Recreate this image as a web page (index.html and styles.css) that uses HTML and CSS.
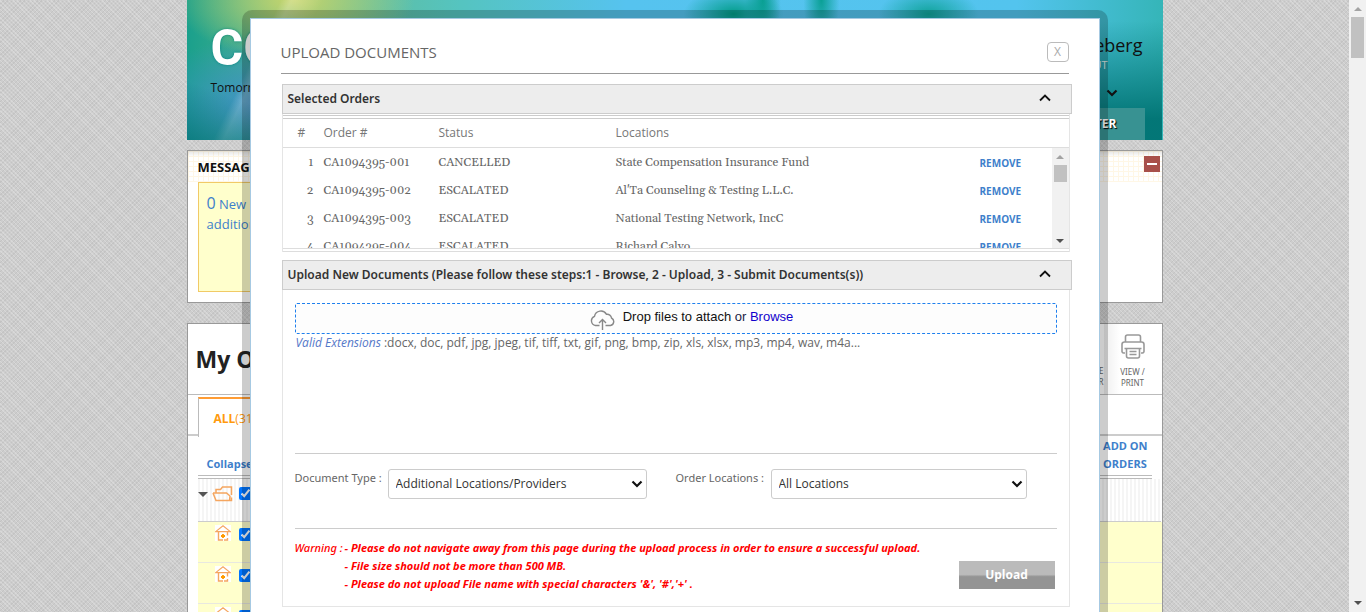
FILE: index.html
```html
<!DOCTYPE html>
<html lang="en">
<head>
<meta charset="utf-8">
<title>Upload Documents</title>
<link rel="stylesheet" href="styles.css">
</head>
<body>
<svg class="sprite" aria-hidden="true">
  <symbol id="house" viewBox="0 0 16 16">
    <rect width="16" height="16" fill="#fff"/>
    <path d="M.7 6.600 8 .8l7.300 5.800H.7Z" fill="none" stroke="#f5a660" stroke-width="1.200"/>
    <path d="M3.500 7v8H8M12.500 7v3.500M12.500 13v2H9" fill="none" stroke="#f5a660" stroke-width="1.400"/>
    <path d="M8 9v4M6 11h4" stroke="#f90" stroke-width="1.800"/>
  </symbol>
  <symbol id="chevron-up" viewBox="0 0 12 8"><path d="M1 6.500 6 1.500l5 5" fill="none" stroke="#111" stroke-width="1.800"/></symbol>
  <symbol id="chevron-down" viewBox="0 0 12 8"><path d="M1.500 1.500 6 6l4.500-4.500" fill="none" stroke="#111" stroke-width="2.200"/></symbol>
</svg>
<div class="window">
  <main class="page">
    <header class="banner">
      <div class="brand">
        <div class="logo">CO</div>
        <div class="tagline">Tomorrow</div>
      </div>
      <div class="account">
        <div class="user">eberg</div>
        <a class="logout" href="#">LOGOUT</a>
        <svg class="account-arrow" width="12" height="8"><use href="#chevron-down"/></svg>
        <a class="center-link" href="#">CENTER</a>
      </div>
    </header>

    <section class="card messages">
      <div class="messages-head">
        <h2>MESSAGES</h2>
        <button class="minimize" aria-label="Minimize"></button>
      </div>
      <div class="note"><a href="#"><span class="count">0</span> New C<br>addition</a></div>
    </section>

    <section class="card orders">
      <div class="orders-head">
        <h1>My Orders</h1>
        <div class="tools">
          <a class="tool" href="#">CE<br>R</a>
          <a class="tool print" href="#">
            <svg width="24" height="25" viewBox="0 0 24 25" fill="none" stroke="#999" stroke-width="1.600">
              <path d="M4.500 8V3a2 2 0 0 1 2-2h11a2 2 0 0 1 2 2v5"/>
              <path d="M4 19H2.500A1.700 1.700 0 0 1 1 17v-6.500A2.500 2.500 0 0 1 3.500 8h17a2.500 2.500 0 0 1 2.500 2.500V17a1.700 1.700 0 0 1-1.500 2H20"/>
              <path d="M3.500 14.500h17M5.500 14.500V22a2 2 0 0 0 2 2h9a2 2 0 0 0 2-2v-7.500M8.500 17.500h7M8.500 20.500h7"/>
            </svg>
            <span>VIEW /<br>PRINT</span>
          </a>
        </div>
      </div>
      <div class="tabs"><a class="tab" href="#"><b>ALL</b>(31)</a></div>
      <div class="list-head"><a href="#">Collapse</a><a class="addon" href="#">ADD ON<br>ORDERS</a></div>
      <div class="list">
        <div class="row group">
          <svg width="10" height="6" viewBox="0 0 10 6"><path d="M0 0h10L5 5Z" fill="#555"/></svg>
          <svg class="folder" width="21" height="16" viewBox="0 0 21 16" fill="none" stroke="#f5a660" stroke-width="1.500">
            <path d="M4 7V3.500H8.500L10.500 1H19.500V9"/>
            <path d="M1 7H14.500L18 10M1 7l3 7.500h13.500L18 10M19.500 11.500v3H16"/>
          </svg>
          <input type="checkbox" checked aria-label="Select group">
        </div>
        <div class="row"><svg width="16" height="16"><use href="#house"/></svg><input type="checkbox" checked aria-label="Select order 1"></div>
        <div class="row"><svg width="16" height="16"><use href="#house"/></svg><input type="checkbox" checked aria-label="Select order 2"></div>
        <div class="row"><svg width="16" height="16"><use href="#house"/></svg><input type="checkbox" checked aria-label="Select order 3"></div>
      </div>
    </section>
  </main>
  <div class="scrollbar"><i class="arrow up"></i><i class="thumb"></i><i class="arrow down"></i></div>
</div>

<div class="overlay">
  <div class="dialog" role="dialog" aria-labelledby="title">
    <div class="dialog-head">
      <h2 id="title">UPLOAD DOCUMENTS</h2>
      <button class="close" aria-label="Close">X</button>
    </div>

    <section class="panel">
      <button class="panel-title">Selected Orders<svg width="12" height="8"><use href="#chevron-up"/></svg></button>
      <div class="selected">
        <table>
          <thead><tr><th>#</th><th>Order #</th><th>Status</th><th>Locations</th><th></th></tr></thead>
          <tbody>
            <tr><td>1</td><td>CA1094395-001</td><td>CANCELLED</td><td>State Compensation Insurance Fund</td><td><a href="#">REMOVE</a></td></tr>
            <tr><td>2</td><td>CA1094395-002</td><td>ESCALATED</td><td>Al'Ta Counseling &amp; Testing L.L.C.</td><td><a href="#">REMOVE</a></td></tr>
            <tr><td>3</td><td>CA1094395-003</td><td>ESCALATED</td><td>National Testing Network, IncC</td><td><a href="#">REMOVE</a></td></tr>
            <tr><td>4</td><td>CA1094395-004</td><td>ESCALATED</td><td>Richard Calvo</td><td><a href="#">REMOVE</a></td></tr>
          </tbody>
        </table>
        <div class="scrollbar inner"><i class="arrow up"></i><i class="thumb"></i><i class="arrow down"></i></div>
      </div>
    </section>

    <section class="panel">
      <button class="panel-title">Upload New Documents (Please follow these steps:1 - Browse, 2 - Upload, 3 - Submit Documents(s))<svg width="12" height="8"><use href="#chevron-up"/></svg></button>
      <div class="upload">
        <div class="drop">
          <svg width="25" height="20" viewBox="0 0 25 20" fill="none" stroke="#888" stroke-width="1.400">
            <path d="M9.500 15.500H5.500A4.800 4.800 0 0 1 4.500 6.300 6.500 6.500 0 0 1 16.500 4.300 4.300 4.300 0 0 1 21.500 8 4 4 0 0 1 20.500 15.500H15.500"/>
            <path d="M12.500 20V9.500M9 13l3.500-3.500L16 13"/>
          </svg>
          <span>Drop files to attach <span class="or">or</span> <a href="#">Browse</a></span>
        </div>
        <p class="extensions"><em>Valid Extensions</em> :docx, doc, pdf, jpg, jpeg, tif, tiff, txt, gif, png, bmp, zip, xls, xlsx, mp3, mp4, wav, m4a...</p>
        <div class="fields">
          <label for="type">Document Type :</label>
          <span class="select"><select id="type"><option>Additional Locations/Providers</option></select><svg width="12" height="8"><use href="#chevron-down"/></svg></span>
          <label class="second" for="loc">Order Locations :</label>
          <span class="select all"><select id="loc"><option>All Locations</option></select><svg width="12" height="8"><use href="#chevron-down"/></svg></span>
        </div>
        <div class="foot">
          <div class="warning">
            <span>Warning :</span>
            <p>- Please do not navigate away from this page during the upload process in order to ensure a successful upload.<br>- File size should not be more than 500 MB.<br>- Please do not upload File name with special characters '&amp;', '#','+' .</p>
          </div>
          <button class="submit">Upload</button>
        </div>
      </div>
    </section>
  </div>
</div>
</body>
</html>
```
FILE: styles.css
```css
* { box-sizing: border-box; }
html, body { height: 100%; }
body {
  margin: 0;
  overflow: hidden;
  font: 12px/18px "Open Sans", "Noto Sans", sans-serif;
  color: #666;
}
h1, h2, p { margin: 0; }
a { color: #3e7fcb; text-decoration: none; }
button, select { font: inherit; }
input { margin: 0; }
.sprite { display: none; }

.window {
  display: flex;
  height: 100vh;
  overflow: hidden;
  background-color: #cdcdcd;
  background-image:
    repeating-linear-gradient(45deg, rgba(255,255,255,.22) 0 1px, transparent 1px 3px),
    repeating-linear-gradient(-45deg, rgba(140,140,140,.15) 0 1px, transparent 1px 3px);
}
.page { width: 976px; margin: 0 auto; }
.scrollbar {
  display: flex;
  flex-direction: column;
  align-items: center;
  width: 17px;
  padding: 7px 0;
  background: #f1f1f1;
}
.arrow { border: 4px solid transparent; }
.arrow.up { border-top: 0; border-bottom-color: #a3a3a3; }
.arrow.down { margin-top: auto; border-bottom: 0; border-top-color: #505050; }
.thumb { width: 13px; height: 41px; margin-top: 6px; background: #c1c1c1; }

.banner {
  display: flex;
  justify-content: space-between;
  height: 140px;
  background:
    linear-gradient(20deg, rgba(0,105,115,.6), transparent 12%),
    linear-gradient(116deg, transparent 9%, rgba(255,255,255,.22) 10%, transparent 13%),
    linear-gradient(180deg, transparent 15%, rgba(0,115,115,.95) 85%) right / 12% 100% no-repeat,
    radial-gradient(ellipse 120px 60px at 11% 0, #c8d66c, transparent),
    radial-gradient(ellipse 50px 26px at 56% 14px, #009c88, transparent),
    radial-gradient(ellipse 18px 50px at 59% 0, #0aa095, transparent),
    radial-gradient(ellipse 18px 50px at 65% 0, #0aa095, transparent),
    radial-gradient(ellipse 50px 26px at 76% 14px, #0fa39a, transparent),
    radial-gradient(ellipse 120px 70px at 8% 75%, #3f8fcc, transparent),
    linear-gradient(90deg, #1aa08c, #63b98d 12%, #55c4c0 28%, #56c3ef 45%, #53c4ee 85%, #35b5b8);
}
.brand { padding: 18px 0 0 24px; color: #111; }
.logo {
  font: bold 50px/60px Roboto, sans-serif;
  color: #fff;
  text-shadow: 0 0 3px #0a8580;
}
.tagline { font-size: 12px; line-height: 20px; }
.account {
  display: flex;
  flex-direction: column;
  align-items: flex-end;
  padding: 34px 18px 0 0;
}
.user { padding-right: 2px; font-size: 18px; line-height: 23px; color: #111; }
.logout { padding-right: 37px; font-size: 11px; line-height: 16px; color: #d8e8e5; }
.account-arrow { margin: 16px 27px 0 0; }
.center-link {
  width: 120px;
  margin-top: auto;
  padding-right: 28px;
  background: #389292;
  font-weight: bold;
  font-size: 12px;
  line-height: 32px;
  text-align: right;
  color: #fff;
  text-shadow: 1px 1px 1px #000;
}

.card { border: 1px solid #999; background: #fff; }
.messages { height: 153px; margin-top: 10px; }
.messages-head {
  display: flex;
  justify-content: space-between;
  padding: 5px 2px 0 10px;
  height: 31px;
  background:
    linear-gradient(rgba(0,0,0,.1), transparent 6px),
    repeating-linear-gradient(#fff7e6 0 1px, transparent 1px 5px),
    repeating-linear-gradient(90deg, #fff7e6 0 1px, transparent 1px 5px);
}
.messages-head h2 { font-size: 13px; line-height: 22px; color: #111; }
.minimize { width: 16px; height: 16px; padding: 0; border: 0; background: linear-gradient(#fff, #fff) center / 10px 2px no-repeat, #a8504a; }
.note {
  width: 60%;
  height: 110px;
  margin: 0 10px;
  padding: 10px 8px;
  border: 1px solid #f1ca66;
  background: #ffc;
  font-size: 13px;
  line-height: 20px;
}
.count { font-size: 16px; }

.orders { margin-top: 20px; height: 600px; }
.orders-head { display: flex; justify-content: space-between; height: 71px; padding-left: 8px; border-bottom: 1px solid #bbb; }
.orders-head h1 { font-size: 23px; line-height: 70px; color: #222; }
.tools { display: flex; }
.tool { width: 58px; padding: 41px 0 0; font: 8px/11px "Noto Sans", sans-serif; text-align: right; color: #666; }
.tool.print { padding: 10px 0 0; text-align: center; background: linear-gradient(90deg, #eee, #fff 16px); }
.tool svg { display: block; margin: 0 auto 7px; }
.tool span { display: block; }
.tabs { display: flex; height: 41px; padding: 2px 0 0 10px; border-bottom: 2px solid #ccc; }
.tab {
  width: 120px;
  height: 40px;
  padding-left: 15px;
  border-left: 1px solid #bbb;
  border-top: 2px solid #ff9c33;
  background: #fff;
  line-height: 40px;
  color: #ff9a0d;
}
.list-head {
  display: flex;
  justify-content: space-between;
  align-items: flex-end;
  height: 43px;
  margin: 0 10px;
  padding: 0 4px 2px 9px;
  border-bottom: 4px double #bbb;
  font-size: 11px;
  font-weight: bold;
}
.list { margin: 0 0 0 10px; }
.row {
  display: flex;
  align-items: flex-start;
  gap: 8px;
  height: 41px;
  padding: 3px 0 0 17px;
  border-bottom: 1px solid #e8e8e0;
  background: #ffc;
}
.row input { width: 13px; height: 13px; margin-top: 3px; accent-color: #0075ff; }
.row.group {
  gap: 0;
  height: 43px;
  padding: 6px 0 0;
  margin-right: 1px;
  border-color: #ccc;
  background: repeating-linear-gradient(90deg, #f5f5f5 0 2px, #fff 2px 4px);
}
.row.group svg { margin-top: 7px; }
.row.group .folder { margin: 1px 6px 0 4px; }
.row.group input { margin-top: 2px; }

.overlay {
  position: fixed;
  inset: 10px 17px -20px 0;
  width: 866px;
  max-width: calc(100vw - 17px);
  margin: 0 auto;
  padding: 8px;
  border-radius: 10px;
  background: rgba(0, 0, 0, .2);
}
.dialog { height: 100%; padding: 21px 27px 0 30px; border: 1px solid #a6c9e2; background: #fff; }
.dialog-head {
  display: flex;
  justify-content: space-between;
  align-items: center;
  height: 34px;
  margin-right: 3px;
  padding-bottom: 9px;
  border-bottom: 1px solid #999;
}
.dialog-head h2 { font-size: 15px; font-weight: normal; line-height: 24px; color: #666; }
.close { width: 22px; height: 20px; padding: 0; border: 1px solid #bbb; border-radius: 4px; background: #fff; color: #aaa; line-height: 16px; }
.panel { margin: 10px 0 0 1px; }
.panel + .panel { margin-top: 8px; }
.panel-title {
  display: flex;
  justify-content: space-between;
  align-items: center;
  width: 100%;
  height: 30px;
  padding: 0 20px 0 5px;
  border: 1px solid #ccc;
  background: #ededed;
  font-family: "Noto Sans", sans-serif;
  font-size: 12px;
  font-weight: 600;
  color: #333;
}
.panel-title svg { margin-bottom: 2px; }
.selected {
  position: relative;
  margin-right: 2px;
  padding: 1px 0 0;
  border: 1px solid #e5e5e5;
  border-width: 0 1px;
}
.selected table { display: block; border-top: 4px double #ccc; border-bottom: 4px double #ddd; }
thead, tbody { display: block; }
tbody { height: 100px; overflow: hidden; }
thead { border-bottom: 1px solid #ddd; }
tr { display: grid; grid-template-columns: 40px 115px 177px 364px 1fr; }
th { padding: 0 0 0 1px; font-weight: normal; text-align: left; line-height: 28px; color: #777; }
th:first-child { padding-left: 15px; }
td { height: 28px; padding: 1px 0 0 1px; font: 12px/28px Georgia, Gelasio, "Liberation Serif", serif; }
td:first-child { padding-right: 9px; text-align: right; }
td a { display: block; font: bold 10px/28px "Open Sans", sans-serif; }
.scrollbar.inner { position: absolute; right: 0; bottom: 4px; height: 100px; padding: 7px 0 5px; }
.inner .thumb { height: 17px; margin-top: 6px; }

.upload { margin-right: 2px; padding: 13px 12px 13px; border: 1px solid #e5e5e5; border-top: 0; }
.drop {
  display: flex;
  justify-content: center;
  gap: 8px;
  height: 31px;
  padding: 3px 0 0 32px;
  border: 1px dashed #1f80ee;
  border-radius: 2px;
  background: #fdfdfd;
  font: 13px/19px "Liberation Sans", sans-serif;
  color: #111;
}
.drop svg { margin-top: 3px; }
.or { color: #224; }
.drop a { color: #10c; }
.extensions { height: 120px; padding-left: 1px; border-bottom: 1px solid #ccc; }
.extensions em { color: #5577c8; }
.fields { display: flex; height: 75px; padding-top: 15px; border-bottom: 1px solid #ccc; }
.fields label { flex: none; width: 93px; font: 11px/18px "Noto Sans", sans-serif; white-space: nowrap; }
.fields .second { width: 95px; margin-left: 29px; }
.select { position: relative; flex: 0 1 259px; height: 30px; }
.select.all { flex-basis: 256px; }
.select select {
  width: 100%;
  height: 100%;
  padding: 0 7px;
  appearance: none;
  border: 1px solid #ccc;
  border-radius: 3px;
  background: #fff;
  font-size: 12px;
  color: #333;
}
.select svg { position: absolute; right: 4px; top: 11px; }
.foot { display: flex; justify-content: space-between; padding: 10px 2px 0 0; color: #f00; }
.warning { display: flex; font-family: "Noto Sans", sans-serif; font-style: italic; }
.warning p { font-size: 11px; font-weight: bold; }
.warning span { width: 50px; white-space: nowrap; font-weight: 500; font-size: 11px; }
.submit {
  width: 96px;
  height: 28px;
  margin-top: 22px;
  padding: 0;
  border: 0;
  background: linear-gradient(#bbb 0 48%, #949494 56%);
  font-weight: bold;
  color: #fff;
}
```
